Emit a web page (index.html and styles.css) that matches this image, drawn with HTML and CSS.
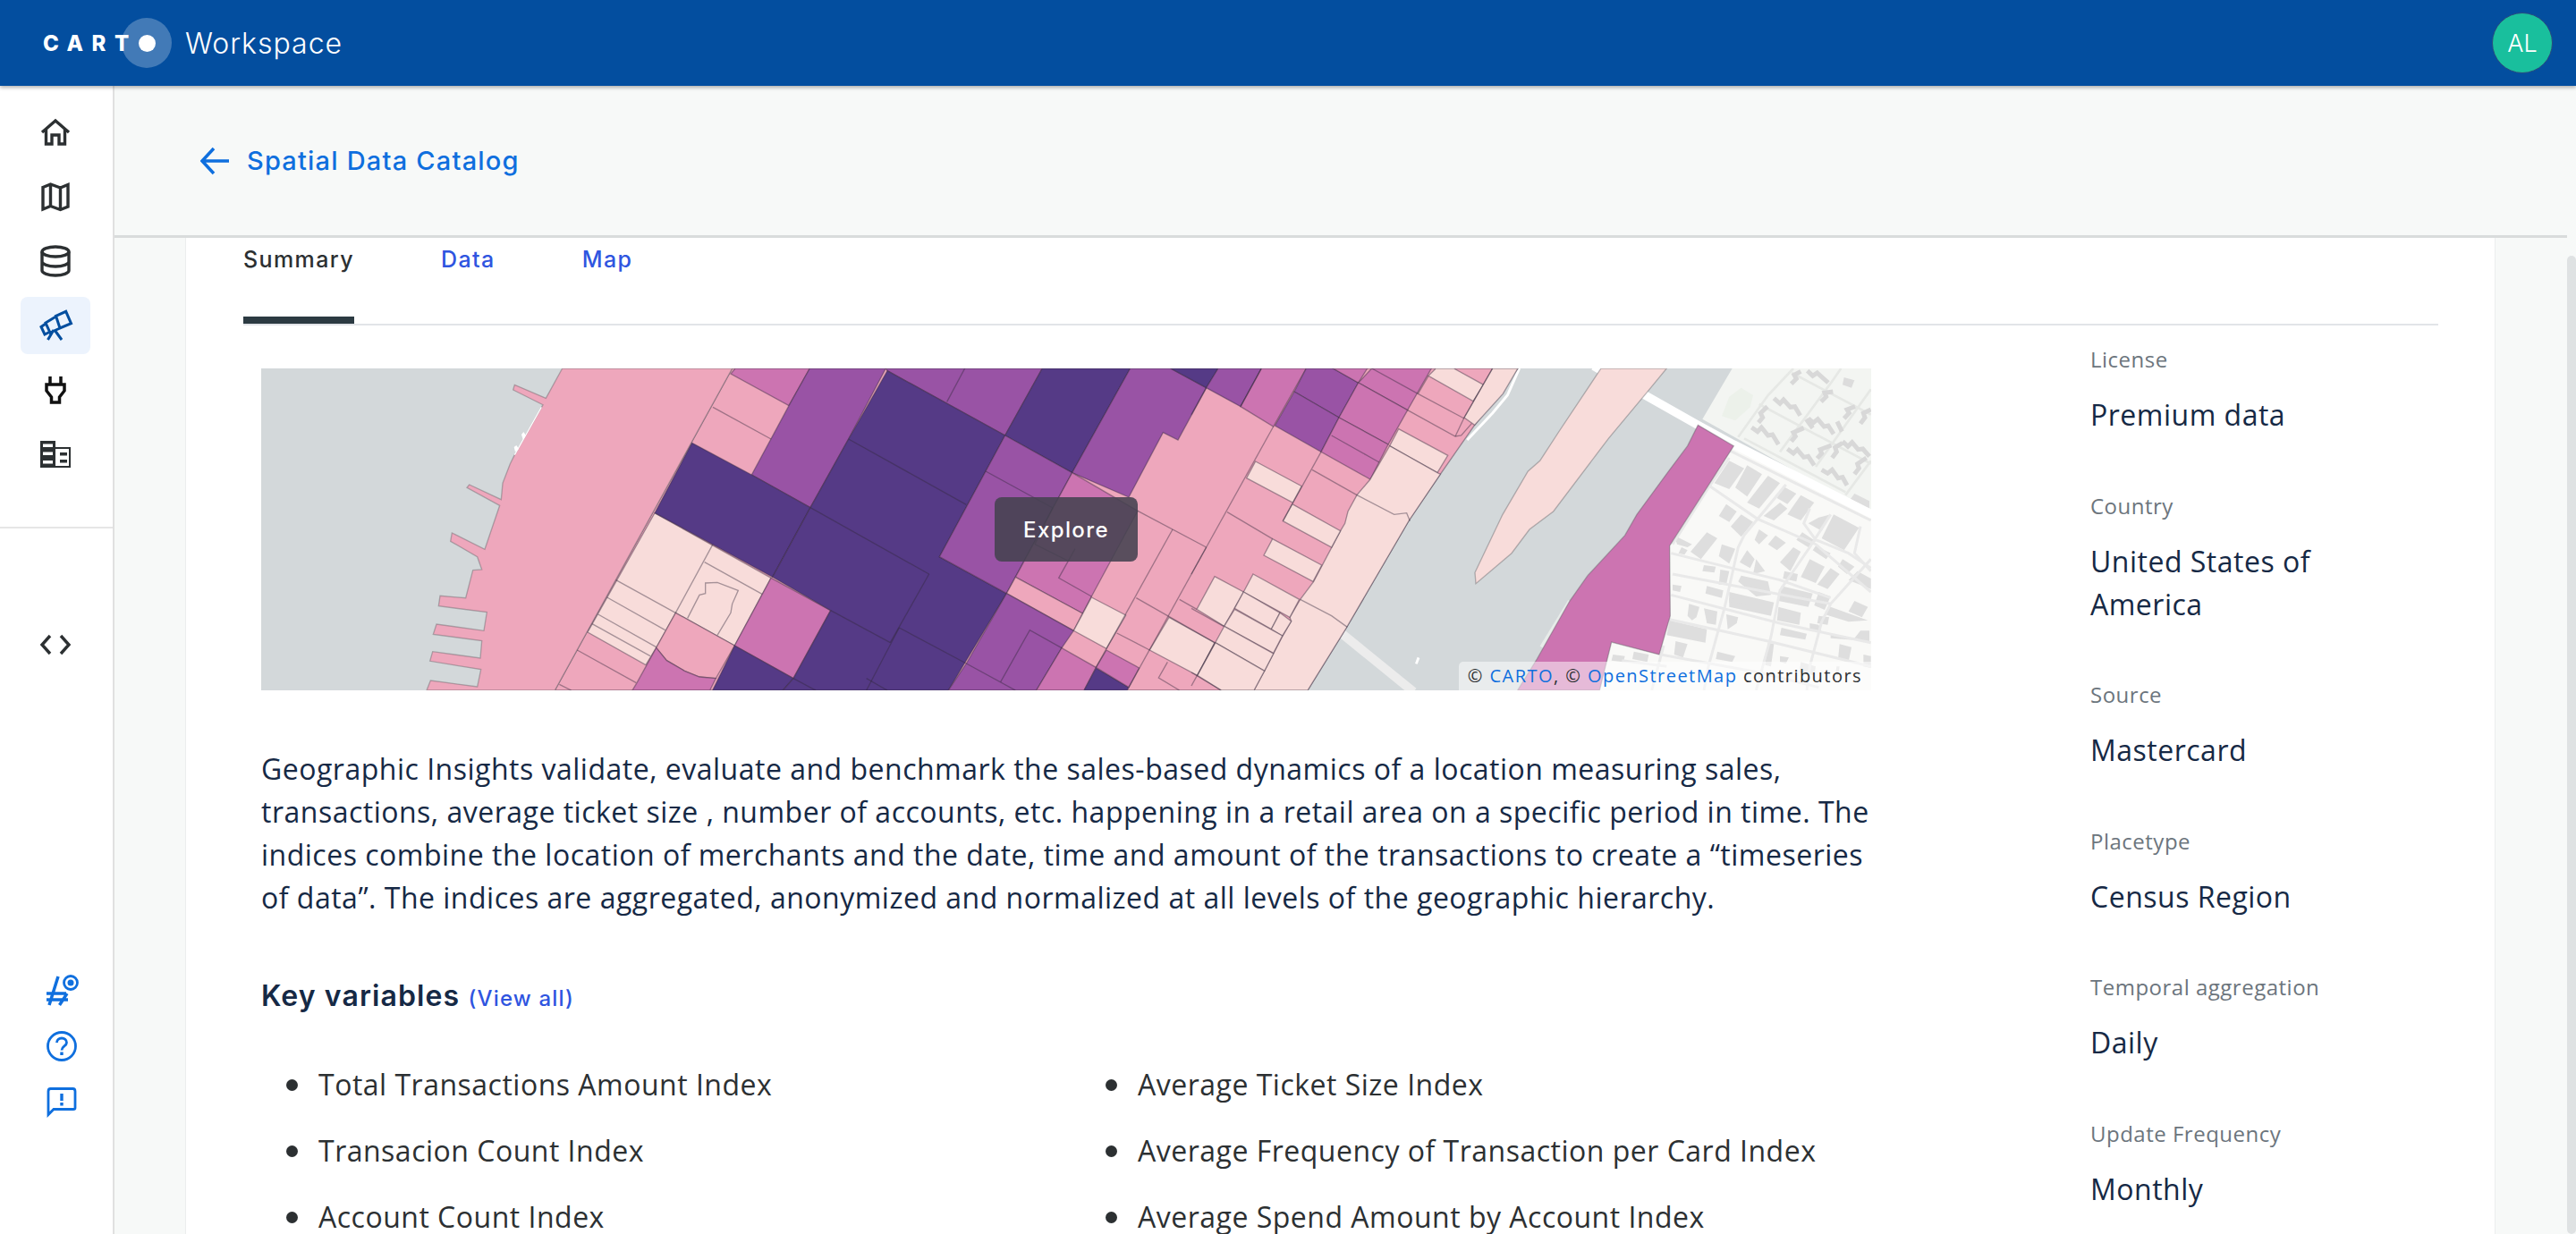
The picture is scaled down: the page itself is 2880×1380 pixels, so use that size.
FILE: index.html
```html
<!DOCTYPE html>
<html lang="en">
<head>
  <meta charset="UTF-8" />
  <title>CARTO Workspace - Spatial Data Catalog</title>
  <link rel="stylesheet" href="styles.css">
</head>
<body>

  <header class="topbar">
    <div class="brand">
      <div class="logo">
        <span class="logo-text">CART</span>
        <span class="logo-halo"><span class="logo-dot"></span></span>
      </div>
      <span class="brand-name">Workspace</span>
    </div>
    <div class="avatar">AL</div>
  </header>

  <div class="layout">
    <aside class="sidebar">
      <nav class="nav">
        <a class="nav-item">
          <svg class="icon" viewBox="0 0 40 40"><path d="M5 20 20 7l15 13M9.500 17v16H16V23h8v10h6.500V17"/></svg>
        </a>
        <a class="nav-item">
          <svg class="icon" viewBox="0 0 40 40"><path d="M6 9.500l8.500-3.500 11 4L34 6.500V31l-8.500 3.500-11-4L6 34zM14.500 6v24.500M25.500 10v24.500"/></svg>
        </a>
        <a class="nav-item">
          <svg class="icon" viewBox="0 0 40 40"><ellipse cx="20" cy="9.500" rx="15" ry="5.500"/><path d="M5 9.500v21c0 3 6.700 5.500 15 5.500s15-2.500 15-5.500v-21M5 20.500c0 3 6.700 5.500 15 5.500s15-2.500 15-5.500"/></svg>
        </a>
        <a class="nav-item active">
          <svg class="icon icon-active" viewBox="0 0 40 40"><path d="M20.500 9.300 31.700 4.300l5.800 13.400L25 23zM20.500 10 9 17l5 11 11-5M9 18l-5 3.500L8 30l6-3M18 25l-6.500 11M19 25l8 11"/></svg>
        </a>
        <a class="nav-item">
          <svg class="icon icon-plug" viewBox="0 0 40 40"><path d="M14 5v9M26 5v9M10 14h20v7l-5.500 7v6h-9v-6L10 21z"/></svg>
        </a>
        <a class="nav-item">
          <svg class="icon icon-solid" viewBox="0 0 40 40"><path d="M3 5h17v30H3z"/><path class="cut" d="M6 8.500h11v3.500H6zM6 17.500h11v3.500H6zM6 27h11v3.500H6z"/><path class="cut" d="M20 13.500h15V33H20z"/><path d="M20 12h17v23H20v-2h15V14H20zM25 18h8v3.500h-8zM25 26h8v3.500h-8z"/></svg>
        </a>
      </nav>
      <div class="sidebar-sep"></div>
      <a class="nav-item code-item">
        <svg class="icon" viewBox="0 0 40 40"><path d="M14 10 5 20l9 10M26 10l9 10-9 10"/></svg>
      </a>
      <div class="sidebar-bottom">
        <a class="help-item">
          <svg class="icon icon-blue" viewBox="0 0 40 40"><path d="M16 5 6 37M26 24l-8.500 13M3 24h22M3 31h24"/><circle class="thin" cx="30" cy="12" r="7.500"/><circle class="dot" cx="30" cy="12" r="3.500"/></svg>
        </a>
        <a class="help-item">
          <svg class="icon icon-blue" viewBox="0 0 40 40"><circle class="thin" cx="20" cy="20" r="15.500"/><path class="thin" d="M14.500 16c0-3 2.500-5 5.500-5s5.500 2 5.500 5c0 4-5.500 4-5.500 8.500"/><path class="dot" d="M18.300 26.500h3.400V30h-3.400z"/></svg>
        </a>
        <a class="help-item">
          <svg class="icon icon-blue" viewBox="0 0 40 40"><path class="thin" d="M5 7.500c0-2 .5-3 2.500-3h25c2 0 2.500 1 2.500 3V26c0 1-.5 1.500-2 1.500H11l-6 6z"/><path class="dot" d="M18.300 10h3.400v8h-3.400zM18.300 20h3.400v3.500h-3.400z"/></svg>
        </a>
      </div>
    </aside>

    <div class="content">
      <div class="content-main">
        <div class="subheader">
          <a class="back-link">
            <svg class="back-arrow" viewBox="0 0 32 32"><path d="M15 2 2 16l13 14M2 16h30"/></svg>
            <span>Spatial Data Catalog</span>
          </a>
        </div>

        <div class="page">
          <section class="card">
            <div class="tabs">
              <a class="tab tab-active">Summary</a>
              <a class="tab">Data</a>
              <a class="tab">Map</a>
            </div>

            <div class="columns">
              <div class="summary">
                <div class="map-box">
                  <!-- coordinates are 3x the map pixels -->
                  <svg class="map-svg" viewBox="0 0 5400 1080">
                    <rect class="water" width="5400" height="1080"/>

                    <g transform="translate(3924 0)">
                      <polygon class="land-n" points="1010,0 1480,0 1480,490 1020,232 910,170"/>
                      <polygon class="park" points="1000,95 1040,65 1080,90 1070,130 1020,175 975,160"/>
                      <g class="street-n">
                        <polyline points="1030,230 1130,90 1215,0"/>
                        <polyline points="1170,280 1340,50 1375,0"/>
                        <polyline points="1290,330 1475,70"/>
                        <polyline points="1390,425 1475,310"/>
                        <polyline points="1100,120 1475,320"/>
                        <polyline points="1210,15 1475,155"/>
                        <polyline points="1050,235 1390,415"/>
                      </g>
                      <g class="zig">
                        <polyline points="1075,198 1095,212 1108,198 1130,225 1145,222 1165,255"/>
                        <polyline points="1195,270 1215,285 1228,272 1250,298 1265,295 1285,325"/>
                        <polyline points="1310,340 1330,352 1345,340 1365,368 1380,365 1395,392"/>
                        <polyline points="1150,100 1170,118 1182,105 1205,130 1220,128 1238,158"/>
                        <polyline points="1265,168 1282,182 1297,170 1318,195 1332,192 1350,220"/>
                        <polyline points="1380,245 1398,262 1412,248 1432,272 1448,270 1470,295"/>
                        <polyline points="1098,182 1112,165 1105,150 1128,128"/>
                        <polyline points="1208,245 1222,228 1215,215 1250,200"/>
                        <polyline points="1295,302 1310,285 1305,272 1342,258"/>
                        <polyline points="1208,52 1225,35 1218,22 1240,10"/>
                        <polyline points="1262,8 1280,25 1295,15 1332,48"/>
                        <polyline points="1308,112 1325,95 1320,82 1348,78"/>
                        <polyline points="1385,168 1402,150 1395,138 1422,128"/>
                        <polyline points="1258,170 1280,200"/>
                        <polyline points="1362,178 1378,212"/>
                        <polyline points="1440,185 1455,165 1450,150 1475,138"/>
                        <polyline points="1345,300 1360,280 1355,265 1380,250"/>
                        <polyline points="1420,355 1435,335 1430,320 1460,300"/>
                      </g>
                      <polygon class="dark-bit" points="1385,30 1420,40 1410,65 1380,55"/>
                      <polygon class="land-s" points="1015,260 1480,490 1480,1080 565,1080 605,918 765,960 800,830 800,595"/>
                      <g class="bldg">
                        <polygon points="1000,310 1050,335 1000,405 950,385"/>
                        <polygon points="1060,325 1110,355 1060,430 1020,400"/>
                        <polygon points="1130,360 1170,385 1100,470 1060,450"/>
                        <polygon points="1180,395 1225,420 1195,455 1160,435"/>
                        <polygon points="1240,425 1285,450 1240,510 1195,490"/>
                        <polygon points="1170,450 1195,470 1150,510 1115,495"/>
                        <polygon points="1300,500 1340,490 1310,545 1265,520"/>
                        <polygon points="1350,490 1435,535 1385,610 1310,570"/>
                        <polygon points="990,455 1025,480 1000,515 965,495"/>
                        <polygon points="1040,490 1080,515 1040,565 1005,530"/>
                        <polygon points="925,550 960,570 905,640 870,615"/>
                        <polygon points="1155,560 1190,585 1160,610 1130,590"/>
                        <polygon points="1215,600 1240,615 1205,680 1170,650"/>
                        <polygon points="1245,550 1290,580 1265,600 1225,575"/>
                        <polygon points="1290,595 1340,620 1325,640 1280,610"/>
                        <polygon points="1270,640 1320,665 1290,720 1240,700"/>
                        <polygon points="1340,670 1370,690 1330,740 1295,725"/>
                        <polygon points="1430,680 1475,705 1475,740 1400,710"/>
                        <polygon points="975,590 1020,605 1000,655 965,630"/>
                        <polygon points="1060,610 1085,640 1070,670 1035,650"/>
                        <polygon points="1090,640 1120,680 1080,690"/>
                        <polygon points="915,660 955,665 950,685 910,680"/>
                        <polygon points="970,675 1000,680 990,725 965,725"/>
                        <polygon points="1040,695 1130,715 1140,760 1090,765 1030,715"/>
                        <polygon points="925,730 980,745 975,770 920,755"/>
                        <polygon points="1175,730 1280,755 1265,800 1165,780"/>
                        <polygon points="1300,750 1340,765 1320,810 1285,795"/>
                        <polygon points="1000,750 1150,785 1140,830 1000,800"/>
                        <polygon points="1165,800 1240,820 1235,860 1160,845"/>
                        <polygon points="1340,800 1465,845 1400,850 1320,825"/>
                        <polygon points="865,790 900,800 890,835 875,845 860,830"/>
                        <polygon points="915,805 960,815 955,860 925,855"/>
                        <polygon points="990,825 1030,835 1025,855 995,875"/>
                        <polygon points="800,845 925,875 920,920 790,895"/>
                        <polygon points="1175,870 1260,890 1255,910 1170,895"/>
                        <polygon points="1270,880 1310,885 1300,860 1270,855"/>
                        <polygon points="1340,890 1420,905 1440,880 1470,880 1470,915 1340,905"/>
                        <polygon points="820,915 860,925 845,970 815,960"/>
                        <polygon points="960,950 1020,965 1010,985 955,975"/>
                        <polygon points="1170,965 1200,970 1190,990 1170,985"/>
                        <polygon points="1370,925 1410,935 1400,985 1365,975"/>
                        <polygon points="1450,960 1475,965 1475,1005 1450,1000"/>
                        <polygon points="680,950 730,960 725,985 675,975"/>
                        <polygon points="610,960 650,965 645,985 605,980"/>
                        <polygon points="1240,985 1290,1000 1285,1030 1235,1020"/>
                        <polygon points="1360,1000 1370,1000 1365,1030 1355,1030"/>
                        <polygon points="1420,420 1470,445 1470,470 1405,440"/>
                        <polygon points="815,560 875,590 860,600 825,590"/>
                        <polygon points="840,600 860,610 850,625 830,620"/>
                        <polygon points="1000,770 1060,780 1060,790 1000,785"/>
                        <polygon points="1380,640 1420,665 1395,690 1365,665"/>
                        <polygon points="1100,540 1130,560 1100,590 1085,575"/>
                        <polygon points="810,725 840,730 835,750 810,745"/>
                        <polygon points="1185,680 1230,690 1225,715 1180,705"/>
                        <polygon points="1420,780 1465,800 1445,835 1400,815"/>
                        <polygon points="1300,830 1335,835 1330,860 1295,855"/>
                        <polygon points="1130,920 1150,925 1140,1000 1120,995"/>
                      </g>
                      <g class="street">
                        <polyline points="935,395 1095,505 1290,590 1475,750"/>
                        <polyline points="805,620 1170,710 1340,770"/>
                        <polyline points="810,690 1340,790"/>
                        <polyline points="805,760 1170,855 1475,920"/>
                        <polyline points="790,840 1130,915 1475,1000"/>
                        <polyline points="770,960 1100,1020 1300,1070"/>
                        <polyline points="1190,390 1050,560 1030,600 985,800 930,1000 915,1080"/>
                        <polyline points="1340,490 1270,600 1170,745 1140,900 1090,1080"/>
                        <polyline points="1475,640 1340,790 1310,850 1270,1000 1260,1080"/>
                        <polyline points="1000,300 930,400 810,590"/>
                        <polyline points="1270,470 1250,520 1290,575 1400,620 1475,670"/>
                        <polyline points="1440,530 1420,620 1475,680"/>
                        <polyline points="1000,275 1475,510"/>
                        <polyline points="790,1000 640,980"/>
                        <polyline points="780,930 740,1080"/>
                      </g>
                      <polyline class="road" points="545,-8 895,190 1015,255 1480,490"/>
                      <polyline class="shore" points="370,935 465,780"/>
                      <polygon class="pale island" points="570,0 790,0 720,85 595,235 410,480 330,540 270,620 150,722 147,685 240,490 325,345 365,310 430,210"/>
                      <polygon class="mag edge" points="895,190 1015,260 800,595 802,830 765,960 605,918 565,1080 290,1080 355,975 465,780 525,695 650,560 690,490 800,340 860,260"/>
                    </g>

                    <g transform="translate(3120 0)">
                      <polyline class="road-grey" points="505,890 745,1085"/>
                      <polyline class="shore-white" points="925,240 1010,150 1060,90 1100,0"/>
                      <polygon class="white-bit" points="758,968 766,972 758,992 750,990"/>
                      <polygon class="pk" points="-1540,0 1095,0 950,190 835,355 730,510 520,870 390,1080 -2135,1080"/>
                    </g>

                    <polygon class="pk strip" points="1010,0 1580,0 985,1080 555,1080 568,1047 725,1068 737,1010 566,982 575,950 735,972 740,914 577,892 588,858 747,880 757,818 595,797 600,763 686,770 710,677 740,675 725,632 635,580 640,552 750,607 800,460 690,400 698,390 805,440 810,385 835,320 850,290 945,122 845,72 850,55 955,100"/>
                    <polyline class="shore-thin" points="940,130 850,290"/>
                    <polygon class="white-bit" points="873,222 880,213 888,225 878,238"/>
                    <polygon class="white-bit" points="848,264 856,258 864,270 852,280"/>

                    <polygon class="pale" points="1320,485 1710,703 1588,930 1390,820 1325,937 1290,995 1095,885"/>
                    <polygon class="pk" points="1390,820 1588,930 1525,1040 1470,1035 1420,1015 1360,980 1325,937"/>
                    <polygon class="mag" points="1325,937 1360,980 1420,1015 1470,1035 1525,1040 1505,1080 1245,1080 1260,1055"/>
                    <g class="map-line">
                      <line x1="1190" y1="710" x2="1390" y2="820"/>
                      <line x1="1160" y1="768" x2="1355" y2="878"/>
                      <line x1="1130" y1="825" x2="1325" y2="935"/>
                      <line x1="1110" y1="857" x2="1305" y2="965"/>
                      <line x1="1515" y1="590" x2="1390" y2="820"/>
                      <line x1="1487" y1="650" x2="1680" y2="757"/>
                      <line x1="1060" y1="945" x2="1258" y2="1055"/>
                      <line x1="1000" y1="1060" x2="1040" y2="1080"/>
                      <polyline points="1430,838 1470,760 1490,755 1490,720 1530,718 1600,745 1580,790 1575,820 1530,895"/>
                    </g>

                    <g transform="translate(1560 0)">
                      <polygon class="mag" points="30,0 280,0 210,125 15,18"/>
                      <polygon class="pur" points="280,0 535,0 410,237 282,467 85,357 210,125"/>
                      <polygon class="drk" points="-115,250 85,357 282,467 155,700 -240,485"/>
                      <polygon class="mag" points="150,703 350,812 225,1040 28,930"/>
                      <polygon class="drk" points="28,930 225,1040 190,1080 -46,1080"/>
                      <polygon class="pur" points="535,0 1060,0 935,225 540,8"/>
                      <polygon class="drk" points="1060,0 1355,0 1160,350 935,225"/>
                      <polygon class="drk" points="540,8 935,225 715,632 940,755 745,1080 190,1080 225,1040 350,812 155,700 282,467 410,237"/>
                      <polygon class="pur" points="935,225 1160,350 940,755 715,632"/>
                      <polygon class="pur" points="1355,0 1490,0 1610,65 1515,240 1465,215 1350,432 1160,350"/>
                      <polygon class="drk" points="1490,0 1650,0 1610,65"/>
                      <polygon class="pur" points="1650,0 1795,0 1725,128 1610,65"/>
                      <polygon class="mag" points="1160,350 1380,478 1225,765 1195,822 970,700"/>
                      <polygon class="pk" points="940,755 970,700 1195,822 1165,880"/>
                      <polygon class="pur" points="940,755 1165,880 1125,938 1040,1080 745,1080 805,990"/>
                      <polygon class="mag" points="1125,938 1240,1003 1200,1080 1040,1080"/>
                      <polygon class="drk" points="1240,1005 1350,1070 1345,1080 1200,1080"/>
                      <polygon class="mag" points="1275,945 1385,1005 1350,1070 1240,1003"/>
                      <polygon class="pale" points="1225,768 1340,828 1275,940 1165,880"/>
                      <polygon class="pale" points="1485,835 1638,920 1580,1030 1420,945"/>
                      <g class="map-line">
                        <line x1="-45" y1="130" x2="150" y2="237"/>
                        <line x1="800" y1="0" x2="740" y2="112"/>
                        <line x1="410" y1="237" x2="805" y2="457"/>
                        <line x1="282" y1="467" x2="680" y2="690"/>
                        <line x1="680" y1="690" x2="550" y2="920"/>
                        <line x1="350" y1="812" x2="550" y2="920"/>
                        <line x1="580" y1="870" x2="805" y2="990"/>
                        <line x1="580" y1="870" x2="470" y2="1080"/>
                        <line x1="225" y1="1040" x2="300" y2="1080"/>
                        <line x1="470" y1="1040" x2="540" y2="1080"/>
                        <line x1="870" y1="345" x2="1095" y2="468"/>
                        <line x1="1095" y1="468" x2="1035" y2="590"/>
                        <line x1="1035" y1="590" x2="1145" y2="645"/>
                        <polyline points="1170,605 1115,703 1225,765"/>
                        <polyline points="920,1052 1018,878 1125,938"/>
                        <line x1="805" y1="990" x2="970" y2="1080"/>
                        <line x1="1380" y1="478" x2="1610" y2="600"/>
                        <line x1="1497" y1="540" x2="1240" y2="1003"/>
                        <line x1="1375" y1="770" x2="1638" y2="920"/>
                        <line x1="1520" y1="775" x2="1578" y2="808"/>
                        <line x1="1310" y1="888" x2="1420" y2="945"/>
                        <line x1="1610" y1="600" x2="1350" y2="1070"/>
                        <polyline points="1520,1080 1450,1038 1480,985"/>
                      </g>
                    </g>

                    <g transform="translate(3120 0)">
                      <polygon class="mag" points="235,0 385,0 275,195 165,128"/>
                      <polygon class="pur" points="385,0 475,0 560,48 495,165 345,78"/>
                      <polygon class="pur" points="345,78 495,165 435,280 280,192"/>
                      <polygon class="mag" points="475,0 590,0 560,48"/>
                      <polygon class="mag" points="605,0 805,0 725,140 560,48"/>
                      <polygon class="mag" points="560,48 725,140 660,255 495,165"/>
                      <polygon class="mag" points="495,165 660,255 600,372 435,280"/>
                      <polygon class="pale" points="820,0 880,0 980,55 945,110 795,25"/>
                      <polygon class="pale" points="1010,0 1095,0 1045,85 950,190 915,165"/>
                      <polygon class="pale" points="695,203 860,292 825,350 665,260"/>
                      <polygon class="pale" points="600,372 665,260 825,350 835,355 730,510 520,870 390,1080 210,1080 245,1015 305,900 335,848 330,835 365,775 410,715 500,545 515,520 525,480 555,425"/>
                      <polygon class="pale" points="215,312 370,395 340,450 185,368"/>
                      <polygon class="pale" points="338,455 500,545 470,600 307,512"/>
                      <polygon class="pale" points="272,572 437,660 408,715 243,627"/>
                      <polygon class="pale" points="78,698 175,750 110,865 18,808"/>
                      <polygon class="pale" points="207,690 362,775 330,835 175,750"/>
                      <polygon class="pale" points="175,750 297,820 268,875 145,805"/>
                      <polygon class="pale" points="297,820 335,848 305,897 268,875"/>
                      <polygon class="pale" points="145,808 305,897 275,955 110,865"/>
                      <polygon class="pale" points="110,865 275,957 245,1015 80,920"/>
                      <polygon class="pale" points="80,920 245,1015 210,1080 100,1080 20,1030"/>
                      <g class="map-line">
                        <line x1="605" y1="0" x2="760" y2="85"/>
                        <line x1="470" y1="225" x2="630" y2="315"/>
                        <line x1="760" y1="85" x2="915" y2="168"/>
                        <polyline points="725,140 885,228 905,225 940,185"/>
                        <polyline points="1010,0 915,165 885,228"/>
                        <line x1="405" y1="340" x2="555" y2="425"/>
                        <polyline points="555,425 680,490 722,485 733,512"/>
                        <polyline points="365,775 470,830 523,868"/>
                        <line x1="120" y1="482" x2="272" y2="572"/>
                        <line x1="275" y1="195" x2="0" y2="690"/>
                        <line x1="435" y1="280" x2="307" y2="512"/>
                        <line x1="0" y1="805" x2="108" y2="865"/>
                        <line x1="0" y1="1020" x2="100" y2="1080"/>
                        <line x1="80" y1="920" x2="0" y2="1065"/>
                        <line x1="795" y1="25" x2="760" y2="85"/>
                        <line x1="50" y1="65" x2="0" y2="155"/>
                        <line x1="235" y1="0" x2="165" y2="128"/>
                      </g>
                    </g>
                  </svg>
                  <a class="explore-btn">Explore</a>
                  <div class="attribution">© <span class="attr-link">CARTO</span>, © <span class="attr-link">OpenStreetMap</span> contributors</div>
                </div>

                <p class="description">Geographic Insights validate, evaluate and benchmark the sales-based dynamics of a location measuring sales, transactions, average ticket size , number of accounts, etc. happening in a retail area on a specific period in time. The indices combine the location of merchants and the date, time and amount of the transactions to create a “timeseries of data”. The indices are aggregated, anonymized and normalized at all levels of the geographic hierarchy.</p>

                <h2 class="section-title">Key variables <a class="view-all">(View all)</a></h2>

                <ul class="variables">
                  <li>Total Transactions Amount Index</li>
                  <li>Average Ticket Size Index</li>
                  <li>Transacion Count Index</li>
                  <li>Average Frequency of Transaction per Card Index</li>
                  <li>Account Count Index</li>
                  <li>Average Spend Amount by Account Index</li>
                </ul>
              </div>

              <dl class="facts">
                <dt>License</dt>
                <dd>Premium data</dd>
                <dt>Country</dt>
                <dd>United States of America</dd>
                <dt>Source</dt>
                <dd>Mastercard</dd>
                <dt>Placetype</dt>
                <dd>Census Region</dd>
                <dt>Temporal aggregation</dt>
                <dd>Daily</dd>
                <dt>Update Frequency</dt>
                <dd>Monthly</dd>
              </dl>
            </div>
          </section>
        </div>
      </div>

      <div class="scrollbar"><div class="scrollbar-thumb"></div></div>
    </div>
  </div>

</body>
</html>
```

FILE: styles.css
```css
* {
  box-sizing: border-box;
}

html,
body {
  height: 100%;
}

body {
  margin: 0;
  height: 1380px;
  overflow: hidden;
  display: flex;
  flex-direction: column;
  font-family: "Open Sans", sans-serif;
  background-color: #f7f9f8;
  color: #162945;
}

/* top bar */
.topbar {
  height: 96px;
  flex-shrink: 0;
  display: flex;
  align-items: center;
  justify-content: space-between;
  padding: 0 26px 0 48px;
  background-color: #034e9f;
  box-shadow: 0 2px 4px rgba(0, 0, 0, 0.3);
  position: relative;
  z-index: 2;
}

.brand {
  display: flex;
  align-items: center;
  gap: 15px;
}

.logo {
  display: flex;
  align-items: center;
}

.logo-text {
  font-family: Inter, sans-serif;
  font-weight: 800;
  font-size: 24px;
  letter-spacing: 9.500px;
  color: #fff;
  width: 88px;
}

.logo-halo {
  width: 56px;
  height: 56px;
  border-radius: 50%;
  background-color: rgba(255, 255, 255, 0.25);
  display: flex;
  align-items: center;
  justify-content: center;
}

.logo-dot {
  width: 19px;
  height: 19px;
  border-radius: 50%;
  background-color: #fff;
}

.brand-name {
  font-family: Inter, sans-serif;
  font-weight: 300;
  font-size: 32px;
  letter-spacing: 1px;
  color: #fff;
}

.avatar {
  width: 68px;
  height: 68px;
  border-radius: 50%;
  display: flex;
  align-items: center;
  justify-content: center;
  background-color: #19bf9d;
  border: 1px solid #2a4a7e;
  color: #fff;
  font-family: Inter, sans-serif;
  font-weight: 300;
  font-size: 27px;
}

/* sidebar */
.layout {
  flex: 1;
  min-height: 0;
  display: flex;
}

.sidebar {
  width: 128px;
  flex-shrink: 0;
  display: flex;
  flex-direction: column;
  background-color: #fff;
  border-right: 2px solid #e0e0e0;
  padding-bottom: 127px;
}

.nav {
  padding-top: 16px;
  display: flex;
  flex-direction: column;
  align-items: center;
  padding-right: 2px;
}

.nav-item {
  width: 78px;
  height: 64px;
  margin: 4px 0;
  border-radius: 8px;
  display: flex;
  align-items: center;
  justify-content: center;
}

.nav-item.active {
  background-color: #ecf3fd;
}

.icon {
  width: 40px;
  height: 40px;
  fill: none;
  stroke: #2c3032;
  stroke-width: 3.400;
}

.icon-active {
  stroke: #034e9f;
  stroke-width: 3;
}

.icon-plug {
  stroke: #111;
  stroke-width: 3.500;
}

.icon-solid {
  fill: #2c3032;
  stroke: none;
}

.icon-solid .cut {
  fill: #fff;
}

.icon-blue {
  stroke: #0f6fde;
  stroke-width: 3.500;
}

.icon-blue .thin {
  stroke-width: 2.800;
}

.icon-blue .dot {
  fill: #0f6fde;
  stroke: none;
}

.sidebar-sep {
  height: 2px;
  margin-top: 45px;
  background-color: #e6e6e6;
}

.code-item {
  margin: 98px 0 0 23px;
}

.sidebar-bottom {
  margin-top: auto;
  display: flex;
  flex-direction: column;
  align-items: center;
  gap: 23px;
  padding-left: 11px;
}

.help-item {
  height: 40px;
}

/* content */
.content {
  flex: 1;
  min-width: 0;
  display: flex;
}

.content-main {
  flex: 1;
  min-width: 0;
  display: flex;
  flex-direction: column;
}

.subheader {
  height: 170px;
  flex-shrink: 0;
  display: flex;
  align-items: center;
  padding-left: 96px;
  border-bottom: 3px solid #d9dcdc;
}

.back-link {
  display: flex;
  align-items: center;
  gap: 20px;
  color: #0f6fde;
  font-family: Inter, sans-serif;
  font-weight: 500;
  font-size: 29px;
  letter-spacing: 1.200px;
}

.back-arrow {
  width: 32px;
  height: 32px;
  fill: none;
  stroke: #0f6fde;
  stroke-width: 3.500;
}

.page {
  flex: 1;
  min-height: 0;
  padding: 0 80px 0 79px;
}

.card {
  height: 100%;
  padding: 0 63px 0 64px;
  background-color: #fff;
  border-left: 1px solid #eceeee;
  border-right: 1px solid #eceeee;
}

.tabs {
  display: flex;
  gap: 97px;
  height: 98px;
  border-bottom: 2px solid #e2e4e8;
}

.tab {
  height: 96px;
  padding-top: 5px;
  color: #2f55e0;
  font-family: Inter, sans-serif;
  font-weight: 500;
  font-size: 25px;
  letter-spacing: 1.400px;
  line-height: 38px;
}

.tab-active {
  color: #2c3032;
  border-bottom: 8px solid #2c3a42;
}

.columns {
  display: grid;
  grid-template-columns: 1800px 388px;
  column-gap: 245px;
  padding-left: 20px;
}

.summary {
  padding-top: 48px;
}

.map-box {
  position: relative;
  width: 1800px;
  height: 360px;
}

.map-svg {
  display: block;
  width: 100%;
  height: 100%;
}

.water {
  fill: #d3d8da;
}

.pale,
.pk,
.mag,
.pur,
.drk {
  stroke: rgba(50, 40, 60, 0.42);
  stroke-width: 4;
}

.pale {
  fill: #f8dcda;
}

.pk {
  fill: #eea7bc;
}

.mag {
  fill: #cc74b1;
}

.pur {
  fill: #9953a5;
}

.drk {
  fill: #553a86;
}

.island,
.strip,
.edge {
  stroke: rgba(90, 90, 95, 0.4);
  stroke-width: 4;
}

.map-line {
  fill: none;
  stroke: rgba(50, 40, 60, 0.42);
  stroke-width: 4;
}

.land-n {
  fill: #f3f5f2;
}

.land-s {
  fill: #f9f9f7;
}

.park {
  fill: #ecf1ea;
}

.zig {
  fill: none;
  stroke: #d8d8d8;
  stroke-width: 15;
}

.dark-bit {
  fill: #dcdcdc;
}

.bldg {
  fill: #dedede;
}

.street {
  fill: none;
  stroke: #e9e9e9;
  stroke-width: 9;
}

.street-n {
  fill: none;
  stroke: #e6e8e5;
  stroke-width: 8;
}

.road {
  fill: none;
  stroke: #fff;
  stroke-width: 28;
}

.road-grey {
  fill: none;
  stroke: #ececec;
  stroke-width: 30;
}

.shore {
  fill: none;
  stroke: #e8ecea;
  stroke-width: 12;
}

.shore-white {
  fill: none;
  stroke: #fff;
  stroke-width: 9;
}

.shore-thin {
  fill: none;
  stroke: #fff;
  stroke-width: 4;
}

.white-bit {
  fill: #fff;
}

/* sits on top of the map */
.explore-btn {
  position: absolute;
  top: 144px;
  left: 820px;
  width: 160px;
  height: 72px;
  display: flex;
  align-items: center;
  justify-content: center;
  border-radius: 8px;
  background-color: rgba(68, 66, 80, 0.88);
  color: #fff;
  font-family: Inter, sans-serif;
  font-weight: 500;
  font-size: 24px;
  letter-spacing: 1.400px;
}

.attribution {
  position: absolute;
  right: 0;
  bottom: 0;
  height: 32px;
  padding: 0 10px;
  border-top-left-radius: 5px;
  background-color: rgba(255, 255, 255, 0.5);
  color: #2c3032;
  font-size: 20px;
  line-height: 32px;
  letter-spacing: 1.450px;
}

.attr-link {
  color: #0f6fde;
}

.description {
  margin: 64px 0 0;
  font-size: 32px;
  line-height: 48px;
  letter-spacing: 0.500px;
}

.section-title {
  margin: 66px 0 0;
  font-family: Inter, sans-serif;
  font-size: 32px;
  line-height: 40px;
  font-weight: 600;
  letter-spacing: 1.100px;
}

.view-all {
  font-family: Inter, sans-serif;
  font-weight: 500;
  font-size: 24px;
  letter-spacing: 1.200px;
  color: #2f55e0;
}

.variables {
  margin: 52px 0 0;
  padding: 0 0 0 64px;
  list-style: none;
  display: grid;
  grid-template-columns: 916px 1fr;
  row-gap: 26px;
  color: #2c3032;
  font-size: 32px;
  line-height: 48px;
  letter-spacing: 0.500px;
}

.variables li {
  display: flex;
  align-items: center;
}

.variables li::before {
  content: "";
  flex-shrink: 0;
  width: 13px;
  height: 13px;
  margin: 0 23px 0 -36px;
  border-radius: 50%;
  background-color: #2c3032;
}

.facts {
  margin: 20px 0 0;
}

.facts dt {
  height: 36px;
  font-size: 24px;
  line-height: 36px;
  color: #6c757d;
  letter-spacing: 0.500px;
}

.facts dd {
  max-width: 340px;
  margin: 20px 0 59.500px;
  font-size: 32px;
  line-height: 48px;
  letter-spacing: 0.500px;
  color: #162945;
}

/* scrollbar column */
.scrollbar {
  width: 10px;
  flex-shrink: 0;
  padding-top: 190px;
}

.scrollbar-thumb {
  height: 100%;
  border-radius: 5px;
  background-color: #dfe2e3;
}
```
